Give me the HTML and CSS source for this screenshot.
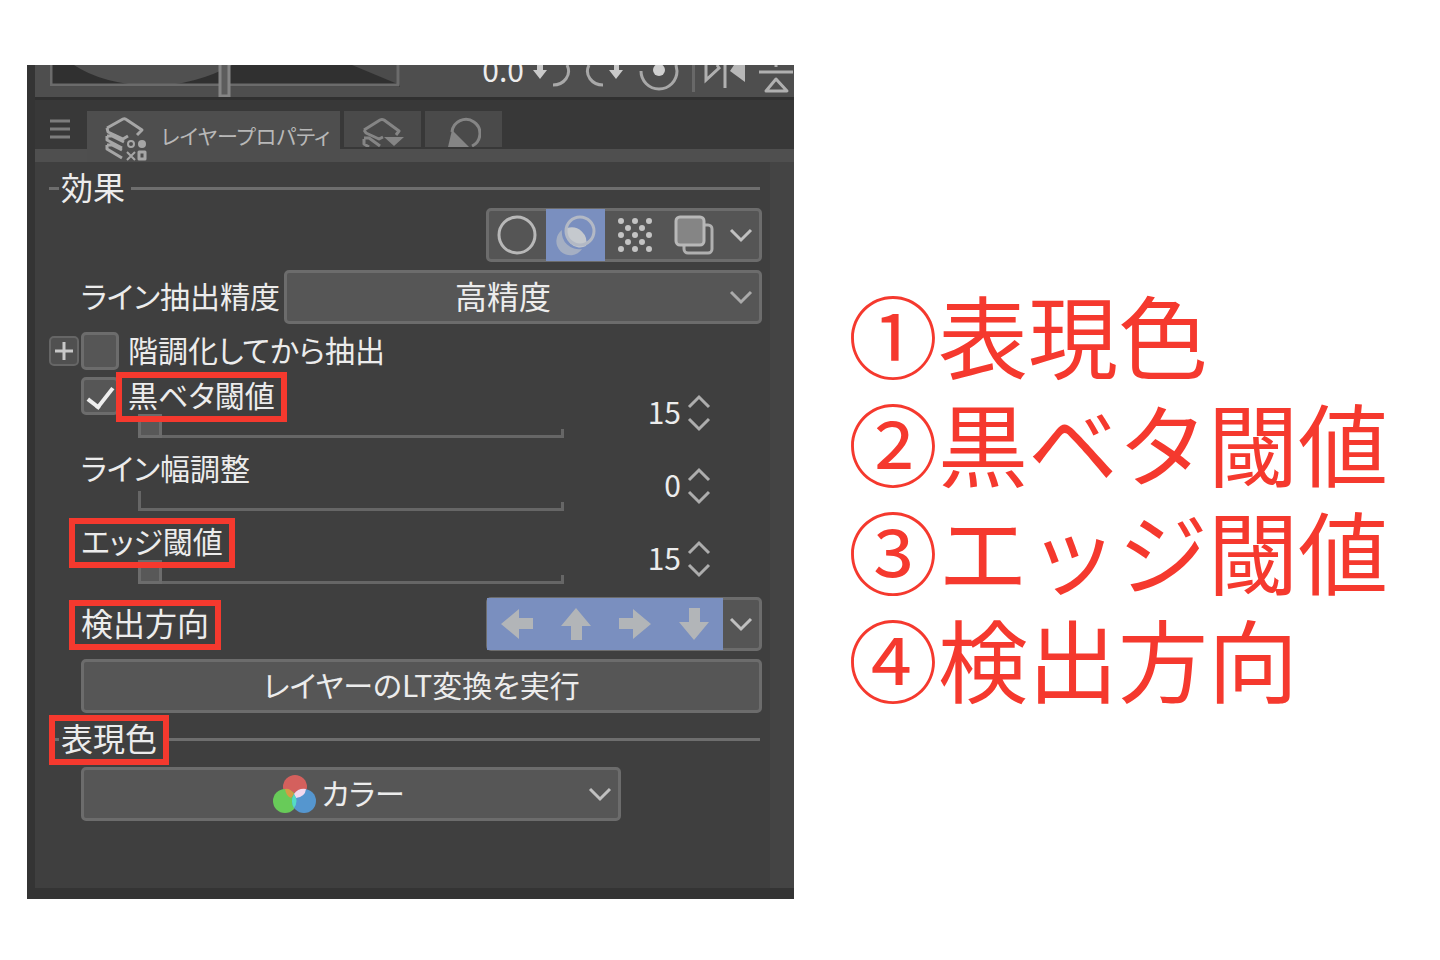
FILE: index.html
```html
<!DOCTYPE html>
<html lang="ja">
<head>
<meta charset="utf-8">
<title>レイヤープロパティ</title>
<link rel="stylesheet" href="styles.css">
</head>
<body>
<main class="page">
  <section class="panel">
    <header class="toolbar">
      <svg class="navigator" viewBox="0 0 350 32" aria-hidden="true">
        <path d="M0 0H350V22H0Z" fill="#303030"/>
        <path d="M24 0Q52 19 102 21Q146 20 182 0Z" fill="#505050"/>
        <path d="M302 0L350 20V0Z" fill="#4b4b4b"/>
        <path d="M1 0V20H348V0" fill="none" stroke="#6b6b6b" stroke-width="3"/>
        <path d="M170 0V31H179V0" fill="#5c5c5c" stroke="#858585" stroke-width="3"/>
      </svg>
      <output class="angle">0.0</output>
      <button class="tool" aria-label="左回転"><svg width="42" height="32" viewBox="0 0 42 32"><path d="M7 0H13V5H17L10 14L3 5H7Z" fill="#c9c9c9"/><path d="M37 0C42 10 34 20 23 20" fill="none" stroke="#a8a8a8" stroke-width="3"/></svg></button>
      <button class="tool" aria-label="右回転"><svg width="42" height="32" viewBox="0 0 42 32"><path d="M30 0H35V5H39L32 14L25 5H30Z" fill="#c9c9c9"/><path d="M5 0C0 10 8 20 19 20" fill="none" stroke="#a8a8a8" stroke-width="3"/></svg></button>
      <button class="tool" aria-label="回転をリセット"><svg width="42" height="32" viewBox="0 0 42 32"><path d="M3 6A18 18 0 0 0 39 6L38 0" fill="none" stroke="#a8a8a8" stroke-width="3"/><circle cx="21" cy="5" r="6" fill="#d0d0d0"/></svg></button>
      <span class="rule"></span>
      <button class="tool" aria-label="左右反転"><svg width="44" height="32" viewBox="0 0 44 32"><path d="M3 0V15L16 3L14 0" fill="none" stroke="#b0b0b0" stroke-width="3"/><path d="M22 0V23" stroke="#b0b0b0" stroke-width="3"/><path d="M42 0V17L27 6L31 0Z" fill="#b8b8b8"/></svg></button>
      <button class="tool" aria-label="上下反転"><svg width="34" height="32" viewBox="0 0 34 32"><path d="M0 7H34M17 0V2" stroke="#b0b0b0" stroke-width="3"/><path d="M17 14L28 26H7Z" fill="none" stroke="#b0b0b0" stroke-width="3" stroke-linejoin="round"/></svg></button>
    </header>

    <nav class="tabs">
      <button class="menu" aria-label="メニュー"><svg width="20" height="22" viewBox="0 0 20 22"><path d="M0 3H20M0 11H20M0 19H20" stroke="#7d7d7d" stroke-width="3"/></svg></button>
      <button class="tab active">
        <svg width="42" height="46" viewBox="0 0 42 46" fill="none" stroke="#a6a6a6" stroke-width="3" stroke-linejoin="round"><path d="M2 12L18 3Q20 2 22 4L37 14L32 19M2 12L3 16L18 23L23 20M2 20V24L17 32M2 20L7 20L19 26M2 29V33L17 42M2 29L7 29L17 34"/><circle cx="26" cy="28" r="3" stroke-width="2"/><circle cx="37" cy="28" r="4" fill="#a6a6a6" stroke="none"/><path d="M22 36L30 44M30 36L22 44" stroke-width="2"/><path d="M34 36H40V43H34Z" stroke-width="3"/></svg>
        <span>レイヤープロパティ</span>
      </button>
      <button class="tab small" aria-label="レイヤー検索"><svg width="42" height="30" viewBox="0 0 42 30" fill="none" stroke="#858585" stroke-width="3" stroke-linejoin="round"><path d="M2 13L18 3Q20 2 22 3L37 14L34 18M2 13L4 16L17 22L21 20M2 22V27L7 30M2 21L7 21L18 29"/><path d="M22 20H42L32 29Z" fill="#858585" stroke="none"/></svg></button>
      <button class="tab small" aria-label="レイヤー"><svg width="34" height="30" viewBox="0 0 34 30"><path d="M5 15A14 14 0 1 1 25 29" fill="none" stroke="#858585" stroke-width="3"/><path d="M5 13L22 30H1Z" fill="#858585"/></svg></button>
    </nav>

    <div class="content">
      <form class="body">
        <h2 class="heading"><span>効果</span></h2>
        <div class="group">
          <button type="button" class="cell" aria-label="境界効果"><svg width="42" height="42" viewBox="0 0 42 42"><circle cx="21" cy="21" r="18" fill="none" stroke="#b8b8b8" stroke-width="3"/></svg></button>
          <button type="button" class="cell on" aria-label="ライン抽出"><svg width="42" height="42" viewBox="0 0 42 42"><path d="M7 16A14 14 0 1 0 27 35A17 17 0 0 1 7 16Z" fill="#a5afc3"/><path d="M12 14A15 15 0 0 1 31 32A14 14 0 0 1 12 14Z" fill="#c5c9ce"/><circle cx="25" cy="17" r="14" fill="none" stroke="#b3b9c5" stroke-width="3"/></svg></button>
          <button type="button" class="cell" aria-label="トーン"><svg width="42" height="42" viewBox="0 0 42 42"><path d="M7 7h0M21 7h0M35 7h0M14 14h0M28 14h0M7 21h0M21 21h0M35 21h0M14 28h0M28 28h0M7 35h0M21 35h0M35 35h0" stroke="#c4c4c4" stroke-width="6" stroke-linecap="round"/></svg></button>
          <button type="button" class="cell" aria-label="レイヤーカラー"><svg width="42" height="42" viewBox="0 0 42 42"><rect x="11" y="11" width="28" height="28" rx="4" fill="none" stroke="#b0b0b0" stroke-width="3"/><rect x="3" y="3" width="28" height="28" rx="4" fill="#858585" stroke="#b8b8b8" stroke-width="3"/></svg></button>
          <button type="button" class="more" aria-label="その他"><svg width="24" height="16" viewBox="0 0 24 16"><path d="M2 3L12 13L22 3" fill="none" stroke="#c0c0c0" stroke-width="3"/></svg></button>
        </div>

        <div class="row">
          <label class="label" for="precision">ライン抽出精度</label>
          <div class="select">
            <select id="precision"><option>高精度</option></select>
            <svg class="arrow" width="24" height="16" viewBox="0 0 24 16"><path d="M2 3L12 13L22 3" fill="none" stroke="#aaa" stroke-width="3"/></svg>
          </div>
        </div>

        <div class="checkrow">
          <button type="button" class="plus" aria-label="展開"><svg width="20" height="20" viewBox="0 0 20 20"><path d="M1 10H19M10 1V19" stroke="#c8c8c8" stroke-width="3"/></svg></button>
          <input type="checkbox" id="poster"><label class="label" for="poster">階調化してから抽出</label>
        </div>

        <div class="sliders">
          <div class="setting">
            <div class="name"><input type="checkbox" id="black" checked><label class="label mark" for="black">黒ベタ閾値</label></div>
            <input class="track" type="range" min="15" max="255" value="15" aria-label="黒ベタ閾値">
            <div class="number"><input type="text" value="15" aria-label="黒ベタ閾値の値">
              <div class="spin"><button type="button" aria-label="増やす"><svg width="24" height="16" viewBox="0 0 24 16"><path d="M2 13L12 3L22 13" fill="none" stroke="#adadad" stroke-width="3"/></svg></button><button type="button" aria-label="減らす"><svg width="24" height="16" viewBox="0 0 24 16"><path d="M2 3L12 13L22 3" fill="none" stroke="#adadad" stroke-width="3"/></svg></button></div></div>
          </div>
          <div class="setting">
            <div class="name"><label class="label" for="width">ライン幅調整</label></div>
            <input class="track bare" type="range" id="width" min="0" max="100" value="0">
            <div class="number"><input type="text" value="0" aria-label="ライン幅調整の値">
              <div class="spin"><button type="button" aria-label="増やす"><svg width="24" height="16" viewBox="0 0 24 16"><path d="M2 13L12 3L22 13" fill="none" stroke="#adadad" stroke-width="3"/></svg></button><button type="button" aria-label="減らす"><svg width="24" height="16" viewBox="0 0 24 16"><path d="M2 3L12 13L22 3" fill="none" stroke="#adadad" stroke-width="3"/></svg></button></div></div>
          </div>
          <div class="setting">
            <div class="name"><label class="label mark" for="edge">エッジ閾値</label></div>
            <input class="track" type="range" id="edge" min="15" max="255" value="15">
            <div class="number"><input type="text" value="15" aria-label="エッジ閾値の値">
              <div class="spin"><button type="button" aria-label="増やす"><svg width="24" height="16" viewBox="0 0 24 16"><path d="M2 13L12 3L22 13" fill="none" stroke="#adadad" stroke-width="3"/></svg></button><button type="button" aria-label="減らす"><svg width="24" height="16" viewBox="0 0 24 16"><path d="M2 3L12 13L22 3" fill="none" stroke="#adadad" stroke-width="3"/></svg></button></div></div>
          </div>
        </div>

        <div class="row direction">
          <span class="label mark">検出方向</span>
          <div class="group">
            <button type="button" class="cell on" aria-label="左"><svg width="34" height="34" viewBox="0 0 34 34"><path d="M1 17L19 2V11H33V22H19V32Z" fill="#b2b5b8"/></svg></button>
            <button type="button" class="cell on" aria-label="上"><svg width="34" height="34" viewBox="0 0 34 34"><path d="M17 1L32 19H23V33H12V19H2Z" fill="#b2b5b8"/></svg></button>
            <button type="button" class="cell on" aria-label="右"><svg width="34" height="34" viewBox="0 0 34 34"><path d="M33 17L15 2V11H1V22H15V32Z" fill="#b2b5b8"/></svg></button>
            <button type="button" class="cell on" aria-label="下"><svg width="34" height="34" viewBox="0 0 34 34"><path d="M17 33L32 15H23V1H12V15H2Z" fill="#b2b5b8"/></svg></button>
            <button type="button" class="more" aria-label="その他"><svg width="24" height="16" viewBox="0 0 24 16"><path d="M2 3L12 13L22 3" fill="none" stroke="#c0c0c0" stroke-width="3"/></svg></button>
          </div>
        </div>

        <button type="button" class="convert">レイヤーのLT変換を実行</button>

        <h2 class="heading second"><span class="mark">表現色</span></h2>
        <div class="select color">
          <svg class="rgb" width="44" height="42" viewBox="0 0 44 42"><circle cx="23" cy="14" r="12" fill="#d4605d"/><circle cx="13" cy="28" r="12" fill="#68cb59"/><circle cx="32" cy="28" r="12" fill="#5596cf"/><path d="M13 16Q18 15 22 21L19 25Q14 23 13 16Z" fill="#d59b45"/><path d="M22 21Q26 15 34 16Q33 24 24 25Z" fill="#f3d9ee"/><path d="M22 21Q27 28 22 35Q18 28 22 21Z" fill="#55dcc4"/></svg>
          <select aria-label="表現色"><option>カラー</option></select>
          <svg class="arrow" width="24" height="16" viewBox="0 0 24 16"><path d="M2 3L12 13L22 3" fill="none" stroke="#c0c0c0" stroke-width="3"/></svg>
        </div>
      </form>
      <div class="scroll"></div>
    </div>
  </section>

  <section class="notes">
    <p>①表現色</p>
    <p>②黒ベタ閾値</p>
    <p>③エッジ閾値</p>
    <p>④検出方向</p>
  </section>
</main>
</body>
</html>
```
FILE: styles.css
```css
* { box-sizing: border-box; }
body { margin: 0; background: #fff; font-family: "Noto Sans CJK JP", sans-serif; }
button, input, select { margin: 0; padding: 0; border: 0; background: none; color: inherit; font: inherit; font-feature-settings: inherit; }
svg { display: block; flex: none; }

.page { display: grid; grid-template-columns: 767fr 565fr; column-gap: 54px; padding: 65px 27px 61px; }

.panel {
  min-width: 0;
  padding: 0 0 11px 8px;
  background: #343434;
  color: #ececec;
  font-size: 30px;
  line-height: 40px;
  font-feature-settings: "palt";
}

.toolbar { display: flex; height: 32px; padding-left: 15px; overflow: hidden; background: #4e4e4e; }
.navigator { width: 350px; height: 32px; }
.angle { width: 130px; padding-right: 6px; margin-top: -16px; text-align: right; }
.tool { flex: none; height: 32px; margin-right: 12px; }
.tool:last-child { margin-right: 0; }
.rule { flex: none; width: 3px; height: 27px; margin-right: 8px; background: #686868; }

.tabs { display: flex; align-items: flex-start; gap: 4px; height: 65px; padding-top: 11px; border-top: 3px solid #303030; background: linear-gradient(#383838 49px, #4f4f4f 49px); }
.menu { width: 48px; padding: 7px 0 0 15px; }
.tab { display: flex; background: #4e4e4e; color: #b8b8b8; }
.active { gap: 14px; width: 253px; height: 51px; padding: 5px 0 0 18px; font-size: 21px; line-height: 38px; }
.small { justify-content: center; width: 77px; height: 36px; padding-top: 6px; background: #4a4a4a; }

.content { display: grid; grid-template-columns: minmax(0, 1fr) 24px; }
.body { padding: 6px 8px 67px 14px; background: #3f3f3f; }
.scroll { background: #444; }

.heading { display: flex; align-items: center; gap: 2px; height: 40px; margin: 0 2px 0 0; font-size: 32px; font-weight: 400; }
.heading::before, .heading::after { content: ""; width: 10px; height: 3px; background: #6e6e6e; }
.heading::after { flex: 1; margin-left: 4px; }
.heading span { padding-bottom: 4px; }
.second { margin-top: 6px; margin-bottom: 8px; }

.group { display: flex; width: 276px; height: 54px; margin-left: auto; border: 3px solid #6c6c6c; border-radius: 5px; background: #555; }
.cell { display: grid; place-items: center; flex: 1; margin: -2px 0; }
.cell:first-child { margin-left: -2px; }
.on { background: #7a8fbf; }
.more { display: grid; place-items: center; width: 36px; }

.row { display: flex; align-items: center; gap: 4px; margin-top: 8px; padding-left: 32px; }
.direction { margin-top: 4px; font-size: 32px; }
.label { padding-bottom: 4px; white-space: nowrap; }
.row .label { flex: none; }

.select { position: relative; flex: 1; max-width: 478px; margin-left: auto; }
.select select { display: block; width: 100%; height: 54px; padding: 0 40px 4px 0; border: 3px solid #6c6c6c; border-radius: 5px; background: #565656; appearance: none; text-align-last: center; }
.row select { font-size: 32px; }
.arrow { position: absolute; right: 9px; top: 19px; pointer-events: none; }
.color { width: 540px; max-width: 100%; margin-left: 32px; }
.color select { padding-left: 64px; }
.rgb { position: absolute; left: 191px; top: 6px; }

.checkrow { display: flex; align-items: center; height: 38px; margin: 8px 0 4px; }
.plus { display: grid; place-items: center; width: 30px; height: 30px; margin-right: 2px; border: 2px solid #666; border-radius: 5px; background: #505050; }
input[type="checkbox"] { flex: none; width: 38px; height: 38px; margin-right: 9px; border: 3px solid #6c6c6c; border-radius: 5px; background: #565656; appearance: none; }
input[type="checkbox"]:checked::before { content: ""; display: block; width: 11px; height: 22px; margin: 2px 0 0 9px; border: solid #eee; border-width: 0 4px 4px 0; transform: rotate(38deg); }

.sliders { padding-left: 32px; }
.setting { display: grid; grid-template-columns: minmax(0, 1fr) 147px; grid-template-rows: 44px 29px; padding-right: 51px; }
.name { display: flex; align-items: center; }
.track {
  grid-row: 2;
  width: auto;
  height: 24px;
  margin: -4px 0 0 57px;
  appearance: none;
  background:
    linear-gradient(#666, #666) left bottom / 100% 3px no-repeat,
    linear-gradient(#666, #666) left bottom / 3px 20px no-repeat,
    linear-gradient(#666, #666) right bottom / 3px 9px no-repeat;
}
.track::-webkit-slider-thumb { width: 24px; height: 24px; border: 3px solid #6c6c6c; background: #585858; appearance: none; }
.bare::-webkit-slider-thumb { visibility: hidden; }
.number { display: flex; grid-column: 2; grid-row: 1 / 3; align-items: center; gap: 6px; padding-top: 4px; }
.number input { flex: 1; min-width: 0; height: 40px; padding-bottom: 4px; text-align: right; }
.spin { display: grid; gap: 6px; }
.spin button { height: 16px; }

.convert { display: block; width: calc(100% - 32px); height: 54px; margin: 8px 0 0 32px; padding-bottom: 4px; border: 3px solid #6c6c6c; border-radius: 5px; background: #565656; text-align: center; }

.mark { position: relative; }
.mark::after { content: ""; position: absolute; inset: -2px -12px -4px; border: 6px solid #f5392e; pointer-events: none; }

.notes { align-self: center; padding-top: 26px; color: #f5392e; font-size: 90px; line-height: 108px; white-space: nowrap; }
.notes p { margin: 0; }
```
